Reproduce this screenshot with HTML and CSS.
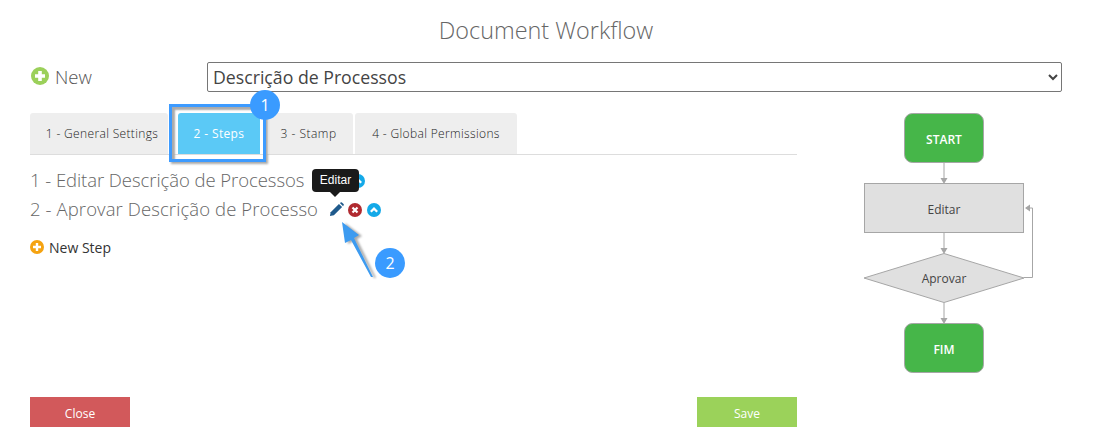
FILE: index.html
```html
<!DOCTYPE html>
<html lang="pt">
<head>
<meta charset="utf-8">
<title>Document Workflow</title>
<link rel="stylesheet" href="styles.css">
</head>
<body>
<div class="page">
  <h1 class="title">Document Workflow</h1>
  <div class="form-row">
    <a class="new-link">
      <svg class="ico-new" viewBox="0 0 18 18"><circle cx="9" cy="9" r="9" fill="#9bd05a"/><path d="M9 4v10M4 9h10" stroke="#fff" stroke-width="3.6"/></svg>
      <span>New</span>
    </a>
    <select class="doc-select"><option>Descrição de Processos</option></select>
  </div>
  <div class="main">
    <div class="left">
      <div class="tabs">
        <div class="tab t1">1 - General Settings</div>
        <div class="tab t2 active">2 - Steps</div>
        <div class="tab t3">3 - Stamp</div>
        <div class="tab t4">4 - Global Permissions</div>
      </div>
      <div class="step step1">
        <span>1 - Editar Descrição de Processos</span>
        <span class="actions">
          <svg class="ico-pencil" viewBox="0 0 16 16"><path d="M1 15l.8-4.200L10.600 2l3.400 3.400-8.800 8.800z" fill="#1f5a8c"/><path d="M11.600 1l.9-.6a1 1 0 0 1 1.300.1l1.700 1.700a1 1 0 0 1 .1 1.300l-.6.9z" fill="#1f5a8c"/></svg>
          <svg class="ico-sm" viewBox="0 0 14 14"><circle cx="7" cy="7" r="7" fill="#b02a30"/><path d="M4.500 4.500l5 5M9.500 4.500l-5 5" stroke="#fff" stroke-width="2.200"/></svg>
          <svg class="ico-sm" viewBox="0 0 14 14"><circle cx="7" cy="7" r="7" fill="#14a9e8"/><path d="M3.800 8.800L7 5.600l3.200 3.200" fill="none" stroke="#fff" stroke-width="2.200"/></svg>
        </span>
      </div>
      <div class="step step2">
        <span>2 - Aprovar Descrição de Processo</span>
        <span class="actions">
          <svg class="ico-pencil" viewBox="0 0 16 16"><path d="M1 15l.8-4.200L10.600 2l3.400 3.400-8.800 8.800z" fill="#1f5a8c"/><path d="M11.600 1l.9-.6a1 1 0 0 1 1.300.1l1.700 1.700a1 1 0 0 1 .1 1.300l-.6.9z" fill="#1f5a8c"/></svg>
          <svg class="ico-sm" viewBox="0 0 14 14"><circle cx="7" cy="7" r="7" fill="#b02a30"/><path d="M4.500 4.500l5 5M9.500 4.500l-5 5" stroke="#fff" stroke-width="2.200"/></svg>
          <svg class="ico-sm" viewBox="0 0 14 14"><circle cx="7" cy="7" r="7" fill="#14a9e8"/><path d="M3.800 8.800L7 5.600l3.200 3.200" fill="none" stroke="#fff" stroke-width="2.200"/></svg>
        </span>
      </div>
      <a class="new-step">
        <svg class="ico-step" viewBox="0 0 14 14"><circle cx="7" cy="7" r="7" fill="#f5a311"/><path d="M7 3v8M3 7h8" stroke="#fff" stroke-width="2.400"/></svg>
        <span>New Step</span>
      </a>
      <div class="buttons">
        <button class="btn close">Close</button>
        <button class="btn save">Save</button>
      </div>
    </div>
    <svg class="flow" viewBox="0 0 162 262" width="162" height="262">
      <g fill="none" stroke="#a6a6a6" stroke-width="1">
        <path d="M81 50v19M81 120v19M81 190v19"/>
        <path d="M161 164.500h8.500V95H163"/>
      </g>
      <g fill="#a6a6a6">
        <path d="M77.500 65h7L81 71zM77.500 135h7L81 141zM77.500 205h7L81 211zM162 95l5-3.500v7z"/>
      </g>
      <rect class="node-g" x="41.500" y="0.500" width="79" height="49" rx="8"/>
      <rect class="node-p" x="1.500" y="70.500" width="159" height="49"/>
      <path class="node-p" d="M81 140.500L161 165 81 189.500 1 165z"/>
      <rect class="node-g" x="41.500" y="210.500" width="79" height="49" rx="8"/>
      <text class="lbl-g" x="81" y="31">START</text>
      <text class="lbl-p" x="81" y="101">Editar</text>
      <text class="lbl-p" x="81" y="170">Aprovar</text>
      <text class="lbl-g" x="81" y="241">FIM</text>
    </svg>
  </div>

  <div class="hl-box"></div>
  <div class="badge b1">1</div>
  <div class="tooltip">Editar</div>
  <svg class="arrow" viewBox="0 0 40 64" width="40" height="64">
    <path d="M3 1l17 13-5 3 19 39-2 0-20-37-6 3z" fill="#3d9bf0"/>
  </svg>
  <div class="badge b2">2</div>
</div>
</body>
</html>
```
FILE: styles.css
```css
* { box-sizing: border-box; }
html, body { margin: 0; padding: 0; background: #fff; }
body { font-family: "Open Sans", "Liberation Sans", sans-serif; color: #555; }
.page { position: relative; width: 1093px; height: 440px; overflow: hidden; padding: 0 31px 0 30px; }
.title { margin: 0; padding-top: 14px; height: 62px; text-align: center; font-size: 23.4px; line-height: 33px; font-weight: 300; color: #666; }
.form-row { display: flex; align-items: center; height: 30px; }
.new-link { display: flex; align-items: center; gap: 6px; width: 177px; font-size: 18.500px; font-weight: 300; color: #555; position: relative; top: -1px; }
.ico-new { width: 18px; height: 18px; margin-left: 1px; }
.doc-select { width: 855px; height: 30px; padding: 0 1px; font-family: inherit; font-size: 17.700px; color: #444; background: #fff; border: 1px solid #767676; border-radius: 2px; }
.main { display: flex; padding-top: 21px; justify-content: space-between; }
.left { width: 767px; }
.tabs { display: flex; height: 42px; border-bottom: 1px solid #ddd; }
.tab { height: 41px; background: #eee; font-size: 12px; font-weight: 300; line-height: 42px; text-align: center; color: #222; border-radius: 3px 3px 0 0; letter-spacing: .35px; }
.t1 { width: 138px; margin-right: 10px; padding-left: 6px; }
.t2 { width: 82px; margin-right: 9px; }
.t3 { width: 84px; margin-right: 2px; padding-right: 5px; letter-spacing: .5px; }
.t4 { width: 162px; }
.tab.active { background: #5bc9f6; color: #fff; font-weight: 400; }
.step { display: flex; align-items: center; font-size: 18.500px; font-weight: 300; color: #666; line-height: 29px; white-space: nowrap; }
.step1 { margin-top: 10px; letter-spacing: -.06px; }
.step2 { letter-spacing: .1px; }
.actions { display: flex; align-items: center; margin-left: 11px; margin-top: 2px; gap: 4px; }
.step1 .actions { margin-left: 9px; }
.ico-pencil { width: 15px; height: 15px; }
.ico-sm { width: 14px; height: 14px; }
.ico-sm + .ico-sm { margin-left: 1px; }
.new-step { display: flex; align-items: center; gap: 5px; margin-top: 14px; height: 20px; font-size: 14px; color: #333; }
.ico-step { width: 14px; height: 14px; }
.buttons { display: flex; justify-content: space-between; margin-top: 140px; }
.btn { width: 100px; height: 30px; border: 0; padding: 2px 0 0; color: #fff; font-family: inherit; font-size: 12px; font-weight: 400; }
.close { background: #d2595b; }
.save { background: #9bd25a; }
.flow { display: block; margin-right: 37px; overflow: visible; }
.node-g { fill: #46b649; stroke: #a6a6a6; }
.node-p { fill: #e0e0e0; stroke: #a6a6a6; }
.lbl-g { fill: #fff; font-size: 12px; font-weight: 600; text-anchor: middle; }
.lbl-p { fill: #444; font-size: 12px; text-anchor: middle; }
.hl-box { position: absolute; left: 169px; top: 104px; width: 97px; height: 58px; border: 3px solid #3d9bff; box-shadow: 2px 2px 2px #aaa, inset 3px 3px 2px #aaa; }
.badge { position: absolute; width: 30px; height: 30px; border-radius: 50%; background: #3a9bff; color: #fff; font-size: 16px; line-height: 30px; text-align: center; }
.b1 { left: 250px; top: 90px; }
.b2 { left: 375px; top: 248px; }
.tooltip { position: absolute; left: 312px; top: 169px; width: 47px; height: 23px; background: #1a1a1a; color: #fff; border-radius: 4px; font-family: "Liberation Sans", sans-serif; font-size: 12px; line-height: 22px; text-align: center; }
.tooltip::after { content: ""; position: absolute; left: 18px; top: 23px; border: 5px solid transparent; border-top-color: #1a1a1a; border-bottom: 0; }
.arrow { position: absolute; left: 339px; top: 221px; filter: drop-shadow(3px 1px 1px #aaa); }
```
